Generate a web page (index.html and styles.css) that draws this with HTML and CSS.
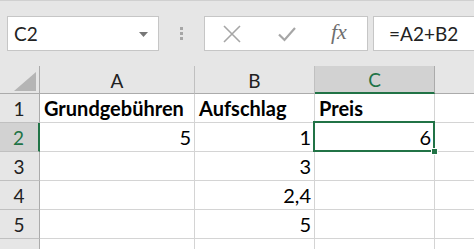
FILE: index.html
```html
<!DOCTYPE html>
<html>
<head>
<meta charset="utf-8">
<link rel="stylesheet" href="styles.css">
</head>
<body>
<div class="app">
  <div class="toolbar">
    <div class="namebox">
      <span class="name">C2</span>
      <svg class="caret" width="9" height="5" viewBox="0 0 9 5"><path d="M0 0h9L4.5 5z" fill="#777"/></svg>
    </div>
    <div class="grip"><i></i><i></i><i></i></div>
    <div class="buttons">
      <svg class="ico" width="20" height="20" viewBox="0 0 20 20"><path d="M2 2L18 18M18 2L2 18" stroke="#a6a6a6" stroke-width="1.6" fill="none"/></svg>
      <svg class="ico" width="20" height="20" viewBox="0 0 20 20"><path d="M2 10.5L7.5 16L18 4" stroke="#a6a6a6" stroke-width="2.2" fill="none"/></svg>
      <span class="fx">fx</span>
    </div>
    <div class="formula">=A2+B2</div>
  </div>
  <div class="sheet">
    <div class="corner"><svg width="22" height="19" viewBox="0 0 22 19"><path d="M0 19H22V0z" fill="#b5b5b5"/></svg></div>
    <div class="ch">A</div>
    <div class="ch">B</div>
    <div class="ch sel">C</div>
    <div class="ch last"></div>

    <div class="rh">1</div>
    <div class="c b">Grundgebühren</div>
    <div class="c b">Aufschlag</div>
    <div class="c b">Preis</div>
    <div class="c last"></div>

    <div class="rh sel">2</div>
    <div class="c r">5</div>
    <div class="c r">1</div>
    <div class="c r active">6<span class="frame"><span class="handle"></span></span></div>
    <div class="c last"></div>

    <div class="rh">3</div>
    <div class="c"></div>
    <div class="c r">3</div>
    <div class="c"></div>
    <div class="c last"></div>

    <div class="rh">4</div>
    <div class="c"></div>
    <div class="c r">2,4</div>
    <div class="c"></div>
    <div class="c last"></div>

    <div class="rh">5</div>
    <div class="c"></div>
    <div class="c r">5</div>
    <div class="c"></div>
    <div class="c last"></div>

    <div class="rh"></div>
    <div class="c"></div>
    <div class="c"></div>
    <div class="c"></div>
    <div class="c last"></div>
  </div>
</div>
</body>
</html>
```

FILE: styles.css
```css
* { box-sizing: border-box; }
html, body { margin: 0; padding: 0; }
body {
  width: 474px;
  height: 249px;
  overflow: hidden;
  background: #fff;
  font-family: Lato, "Liberation Sans", sans-serif;
  color: #000;
}
.app { display: flex; flex-direction: column; }

.toolbar {
  height: 66px;
  background: #e6e6e6;
  border-top: 1px solid #d0d0d0;
  display: flex;
  align-items: flex-start;
  padding: 15px 0 0 7px;
}
.namebox {
  width: 152px;
  height: 35px;
  background: #fff;
  border: 1px solid #c6c6c6;
  display: flex;
  align-items: center;
  justify-content: space-between;
  padding: 0 10px 0 6px;
}
.name { font-size: 19px; color: #222; }
.caret { margin-top: 1px; }
.grip {
  width: 45px;
  height: 35px;
  display: flex;
  flex-direction: column;
  align-items: center;
  justify-content: center;
  gap: 2px;
}
.grip i { display: block; width: 3px; height: 3px; background: #a6a6a6; }
.buttons {
  width: 164px;
  height: 35px;
  background: #fff;
  border: 1px solid #c6c6c6;
  display: flex;
  align-items: center;
  padding: 0 0 0 17px;
}
.buttons .ico:first-child { margin-right: 35px; }
.buttons .ico:nth-child(2) { margin-right: 34px; }
.fx {
  font-family: "Liberation Serif", serif;
  font-style: italic;
  font-size: 22px;
  color: #6f6f6f;
  margin-top: -3px;
}
.formula {
  flex: 1;
  margin-left: 5px;
  height: 35px;
  background: #fff;
  border: 1px solid #c6c6c6;
  border-right: none;
  font-size: 19px;
  color: #222;
  display: flex;
  align-items: center;
  padding-left: 15px;
}

.sheet {
  display: grid;
  grid-template-columns: 40px 155px 120px 120px 1fr;
  grid-template-rows: 28px repeat(6, 29px);
}
.corner, .ch, .rh {
  background: #e6e6e6;
  color: #222;
  font-size: 19px;
  display: flex;
  align-items: center;
  justify-content: center;
}
.corner {
  border-right: 1px solid #ababab;
  border-bottom: 1px solid #ababab;
  align-items: flex-end;
  justify-content: flex-end;
  padding: 0 3px 2px 0;
}
.ch {
  border-right: 1px solid #c0c0c0;
  border-bottom: 1px solid #ababab;
  padding-top: 1px;
}
.ch.last { border-right: none; }
.ch.sel {
  background: #d2d2d2;
  color: #217346;
  border-right-color: #ababab;
  border-bottom: 2px solid #217346;
}
.rh {
  border-right: 1px solid #ababab;
  border-bottom: 1px solid #c0c0c0;
  padding-right: 1px;
}
.rh.sel {
  background: #d2d2d2;
  color: #217346;
  border-right: 2px solid #217346;
}
.c {
  border-right: 1px solid #d4d4d4;
  border-bottom: 1px solid #d4d4d4;
  font-size: 20px;
  display: flex;
  align-items: center;
  padding: 0 3px 0 4px;
  white-space: nowrap;
}
.c.last { border-right: none; }
.c.b { font-weight: bold; }
.c.r { justify-content: flex-end; }
.active { position: relative; }
.frame {
  position: absolute;
  left: -2px;
  top: -2px;
  right: -1px;
  bottom: -1px;
  border: 2px solid #217346;
}
.handle {
  position: absolute;
  right: -5px;
  bottom: -5px;
  width: 7px;
  height: 7px;
  background: #217346;
  border: 1px solid #fff;
}
```
